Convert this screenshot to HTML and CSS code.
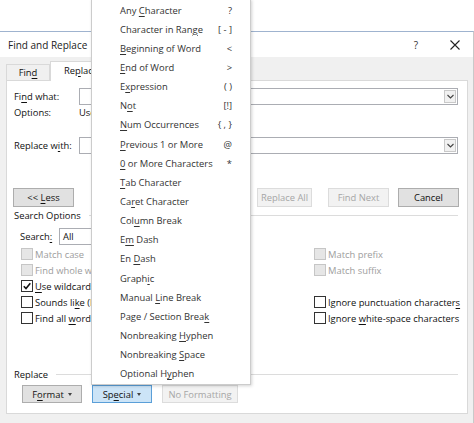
FILE: index.html
```html
<!DOCTYPE html>
<html>
<head>
<meta charset="utf-8">
<link rel="stylesheet" href="styles.css">
</head>
<body>
<div class="screen">
  <div class="top"></div>
  <div class="dialog">
    <div class="titlebar">
      <span class="title">Find and Replace</span>
      <span class="help">?</span>
      <svg class="close" width="10" height="10" viewBox="0 0 10 10"><path d="M0.5 0.5 L9.5 9.5 M9.5 0.5 L0.5 9.5" stroke="#222" stroke-width="1.1" fill="none"/></svg>
    </div>
    <div class="dbody">
      <div class="tabs">
        <div class="tab tab-find"><span>Fin<u>d</u></span></div>
        <div class="tab tab-active"><span>Re<u>p</u>lace</span></div>
      </div>
      <div class="panel">
        <div class="row field-row">
          <span class="lbl">Fi<u>n</u>d what:</span>
          <div class="combo"><span class="drop"><svg width="7" height="5" viewBox="0 0 7 5"><path d="M0.5 1 L3.5 4 L6.5 1" stroke="#444" stroke-width="1.1" fill="none"/></svg></span></div>
        </div>
        <div class="row opts-row">
          <span class="lbl">Options:</span><span class="opt-val">Use Wildcards</span>
        </div>
        <div class="row field-row repl-row">
          <span class="lbl">Replace w<u>i</u>th:</span>
          <div class="combo"><span class="drop"><svg width="7" height="5" viewBox="0 0 7 5"><path d="M0.5 1 L3.5 4 L6.5 1" stroke="#444" stroke-width="1.1" fill="none"/></svg></span></div>
        </div>
        <div class="row btn-row">
          <button class="btn less"><span>&lt;&lt; <u>L</u>ess</span></button>
          <button class="btn b-replace"><span><u>R</u>eplace</span></button>
          <button class="btn b-all" disabled><span>Replace All</span></button>
          <button class="btn b-next" disabled><span>Find Next</span></button>
          <button class="btn b-cancel"><span>Cancel</span></button>
        </div>
        <div class="group-label"><span>Search Options</span></div>
        <div class="row search-row">
          <span class="s-lbl">Search<u>:</u></span>
          <div class="select">All</div>
        </div>
        <div class="checks">
          <div class="chk c1 dis"><span class="box"></span><span>Match case</span></div>
          <div class="chk c2 dis"><span class="box"></span><span>Find whole words only</span></div>
          <div class="chk c3"><span class="box checked"><svg width="10" height="10" viewBox="0 0 10 10"><path d="M1.8 5.2 L4 7.5 L8.3 2.3" stroke="#111" stroke-width="1.6" fill="none"/></svg></span><span><u>U</u>se wildcards</span></div>
          <div class="chk c4"><span class="box"></span><span>Sounds li<u>k</u>e (English)</span></div>
          <div class="chk c5"><span class="box"></span><span>Find all <u>w</u>ord forms (English)</span></div>
          <div class="chk r1 dis"><span class="box"></span><span>Match prefix</span></div>
          <div class="chk r2 dis"><span class="box"></span><span>Match suffix</span></div>
          <div class="chk r4"><span class="box"></span><span>Ignore punctuation character<u>s</u></span></div>
          <div class="chk r5"><span class="box"></span><span>Ignore <u>w</u>hite-space characters</span></div>
        </div>
        <div class="group-label replace-label"><span>Replace</span></div>
        <div class="row bottom-row">
          <button class="btn b-format"><span>F<u>o</u>rmat</span><span class="caret"></span></button>
          <button class="btn b-special"><span>Sp<u>e</u>cial</span><span class="caret"></span></button>
          <button class="btn b-nofmt" disabled><span>No Formatting</span></button>
        </div>
      </div>
    </div>
  </div>

  <div class="menu">
    <div class="mi"><span>Any <u>C</u>haracter</span><span class="key">?</span></div>
    <div class="mi"><span>Character in Ran<u>g</u>e</span><span class="key">[ - ]</span></div>
    <div class="mi"><span><u>B</u>eginning of Word</span><span class="key">&lt;</span></div>
    <div class="mi"><span><u>E</u>nd of Word</span><span class="key">&gt;</span></div>
    <div class="mi"><span>E<u>x</u>pression</span><span class="key">( )</span></div>
    <div class="mi"><span>N<u>o</u>t</span><span class="key">[!]</span></div>
    <div class="mi"><span><u>N</u>um Occurrences</span><span class="key">{ , }</span></div>
    <div class="mi"><span><u>P</u>revious 1 or More</span><span class="key">@</span></div>
    <div class="mi"><span><u>0</u> or More Characters</span><span class="key">*</span></div>
    <div class="mi"><span><u>T</u>ab Character</span></div>
    <div class="mi"><span>Ca<u>r</u>et Character</span></div>
    <div class="mi"><span>Col<u>u</u>mn Break</span></div>
    <div class="mi"><span>E<u>m</u> Dash</span></div>
    <div class="mi"><span>En <u>D</u>ash</span></div>
    <div class="mi"><span>Graph<u>i</u>c</span></div>
    <div class="mi"><span>Manual <u>L</u>ine Break</span></div>
    <div class="mi"><span>Page / Section Brea<u>k</u></span></div>
    <div class="mi"><span>Nonbreaking <u>H</u>yphen</span></div>
    <div class="mi"><span>Nonbreaking <u>S</u>pace</span></div>
    <div class="mi"><span>Optional H<u>y</u>phen</span></div>
  </div>
</div>
</body>
</html>
```

FILE: styles.css
```css
* { box-sizing: border-box; }

body {
  margin: 0;
  width: 474px;
  height: 423px;
  overflow: hidden;
  background: #fff;
  font-family: "Open Sans", "Segoe UI", sans-serif;
  font-size: 9.4px;
  color: #111;
}

u { text-decoration-thickness: 1px; text-underline-offset: 1.5px; }

.screen {
  position: relative;
  width: 474px;
  height: 423px;
  overflow: hidden;
}

.top { height: 31px; background: #fff; }

.dialog {
  border-top: 1px solid #9fb3cf;
  border-right: 1px solid #c9c9c9;
  background: #f0f0f0;
  height: 392px;
}

.titlebar {
  height: 25px;
  background: #fff;
  display: flex;
  align-items: center;
  padding-left: 8px;
}

.title { font-size: 10px; color: #222; }

.help {
  margin-left: auto;
  font-size: 10px;
  color: #333;
}

.close { margin-left: 32px; margin-right: 13px; }

.dbody { padding: 0 5px 0 6px; }

.tabs {
  height: 23px;
  display: flex;
  align-items: flex-end;
}

.tab {
  border: 1px solid #d9d9d9;
  border-bottom: none;
  display: flex;
  align-items: center;
  justify-content: center;
}

.tab-find {
  width: 44px;
  height: 16px;
  background: #f0f0f0;
}

.tab-active {
  width: 62px;
  height: 20px;
  background: #fff;
  margin-bottom: -1px;
  position: relative;
  z-index: 1;
  padding-bottom: 3px;
}

.panel {
  background: #fff;
  border: 1px solid #d9d9d9;
  height: 334px;
  padding: 7px 9px 0 7px;
}

.row { display: flex; align-items: center; }

.field-row { height: 17px; }

.lbl { width: 65px; flex: none; }

.opt-val { white-space: nowrap; }

.combo {
  flex: 1;
  height: 17px;
  border: 1px solid #abadb3;
  background: #fff;
  display: flex;
  justify-content: flex-end;
  align-items: center;
  padding-right: 1px;
}

.drop {
  width: 12px;
  height: 13px;
  border: 1px solid #c9c9c9;
  background: #f1f1f1;
  display: flex;
  align-items: center;
  justify-content: center;
}

.opts-row { height: 15px; }

.repl-row { margin-top: 17px; }

.btn-row { margin-top: 34px; height: 19px; }

.btn {
  font: inherit;
  color: #111;
  height: 19px;
  width: 61px;
  padding: 0;
  border: 1px solid #adadad;
  background: #e1e1e1;
  display: flex;
  align-items: center;
  justify-content: center;
  white-space: nowrap;
}

.btn:disabled {
  background: #f2f2f2;
  border-color: #dcdcdc;
  color: #a6a6a6;
}

.less { margin-left: -1px; }
.b-replace { margin-left: auto; width: 61px; }
.b-all { margin-left: 6px; width: 55px; }
.b-next { margin-left: 16px; }
.b-cancel { margin-left: 9px; margin-right: -1px; }

.group-label {
  display: flex;
  align-items: center;
  height: 14px;
  margin-top: 1px;
}

.group-label::after {
  content: "";
  flex: 1;
  height: 1px;
  background: #dcdcdc;
  margin-left: 8px;
}

.search-row { margin-top: 6px; height: 17px; padding-left: 6px; }

.s-lbl { width: 39px; flex: none; }

.select {
  width: 150px;
  height: 17px;
  border: 1px solid #abadb3;
  display: flex;
  align-items: center;
  padding-left: 3px;
}

.checks {
  margin-top: 1px;
  display: grid;
  grid-template-columns: 293px 1fr;
  grid-template-rows: repeat(5, 16px);
  padding-left: 7px;
}

.chk {
  display: flex;
  align-items: center;
  white-space: nowrap;
}

.box {
  width: 12px;
  height: 12px;
  border: 1px solid #333;
  background: #fff;
  margin-right: 2px;
  flex: none;
  display: flex;
  align-items: center;
  justify-content: center;
}

.chk.dis { color: #9d9d9d; }
.chk.dis .box { border-color: #c6c6c6; background: #e6e6e6; }

.c1 { grid-column: 1; grid-row: 1; }
.c2 { grid-column: 1; grid-row: 2; }
.c3 { grid-column: 1; grid-row: 3; }
.c4 { grid-column: 1; grid-row: 4; }
.c5 { grid-column: 1; grid-row: 5; }
.r1 { grid-column: 2; grid-row: 1; }
.r2 { grid-column: 2; grid-row: 2; }
.r4 { grid-column: 2; grid-row: 4; }
.r5 { grid-column: 2; grid-row: 5; }

.replace-label { margin-top: 41px; }

.bottom-row { margin-top: 4px; height: 18px; padding-left: 8px; gap: 10px; }

.bottom-row .btn { height: 18px; width: 60px; }
.bottom-row .b-nofmt { width: 76px; }

.b-special {
  background: #cce4f7;
  border-color: #5a9fd8;
}

.caret {
  width: 0;
  height: 0;
  border-left: 2.5px solid transparent;
  border-right: 2.5px solid transparent;
  border-top: 3px solid #444;
  margin-left: 4px;
}

.menu {
  position: absolute;
  left: 91px;
  top: -1px;
  width: 160px;
  height: 386px;
  background: #fff;
  border: 1px solid #cccccc;
  box-shadow: 1px 1px 3px rgba(0, 0, 0, 0.18);
  padding-top: 0.5px;
  z-index: 5;
}

.mi {
  height: 19.15px;
  display: flex;
  align-items: center;
  padding-left: 28px;
  padding-right: 18px;
  color: #333;
  white-space: nowrap;
}

.key { margin-left: auto; }
```
